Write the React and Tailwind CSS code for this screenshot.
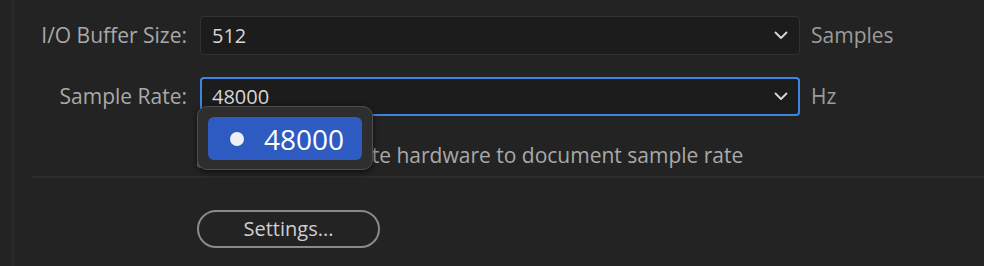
import React from 'react';

const Chevron = () => (
  <svg width="14" height="9" viewBox="0 0 14 9" fill="none" className="shrink-0">
    <path d="M1.5 1.5L7 7l5.5-5.5" stroke="#d8d8d8" strokeWidth="1.8" strokeLinecap="round" strokeLinejoin="round" />
  </svg>
);

const Select = ({ value, focused }) => (
  <div
    className={`flex items-center justify-between w-[600px] h-[39px] rounded-[4px] bg-[#1c1c1c] ${
      focused ? 'border-2 border-[#3f85df] pl-[10px] pr-[10px]' : 'border border-[#323232] pl-[11px] pr-[11px]'
    }`}
  >
    <span className="text-[20px] text-[#d6d6d6]">{value}</span>
    <Chevron />
  </div>
);

const Row = ({ label, value, unit, focused }) => (
  <div className="flex items-center h-[39px]">
    <div className="w-[186px] pr-[13px] text-right text-[21px] text-[#a9a9a9] whitespace-nowrap">{label}</div>
    <Select value={value} focused={focused} />
    <span className="ml-[11px] text-[21px] text-[#9c9c9c]">{unit}</span>
  </div>
);

export default function App() {
  return (
    <div
      className="w-[984px] h-[266px] bg-[#232323] flex overflow-hidden"
      style={{ fontFamily: '"Open Sans", "Noto Sans", sans-serif' }}
    >
      <div className="w-[12px] shrink-0" />
      <div className="w-[2px] shrink-0 bg-[#2a2a2a]" />
      <div className="flex-1 flex flex-col pt-[16px]">
        <Row label="I/O Buffer Size:" value="512" unit="Samples" />
        <div className="h-[22px]" />
        <div className="relative">
          <Row label="Sample Rate:" value="48000" unit="Hz" focused />
          {/* open menu */}
          <div className="absolute left-[183px] top-[29px] w-[176px] h-[64px] rounded-[10px] bg-[#2e2e2e] border border-[#4e4e4e] shadow-[0_2px_6px_rgba(0,0,0,0.6)] p-[10px] z-10">
            <div className="flex items-center h-[43px] rounded-[6px] bg-[#2e5bc2] pl-[22px]">
              <span className="w-[14px] h-[14px] rounded-full bg-[#eef0f6]" />
              <span className="ml-[20px] text-[28px] text-white leading-none">48000</span>
            </div>
          </div>
        </div>
        <div className="flex items-center h-[26px] mt-[27px] pl-[183px]">
          <div className="w-[24px] h-[24px] rounded-[4px] border-2 border-[#7a7a7a]" />
          <span className="ml-[28px] text-[21px] text-[#a9a9a9] whitespace-nowrap">Always update hardware to document sample rate</span>
        </div>
        <div className="h-[2px] bg-[#2c2c2c] ml-[18px] mt-[7px]" />
        <div className="pl-[183px] mt-[32px]">
          <button className="w-[183px] h-[38px] rounded-full border-2 border-[#8a8a8a] text-[20px] text-[#cfcfcf]">
            Settings...
          </button>
        </div>
      </div>
    </div>
  );
}
